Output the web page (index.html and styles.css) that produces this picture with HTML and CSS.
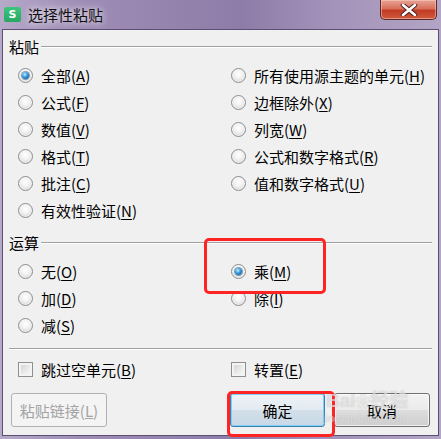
FILE: index.html
```html
<!DOCTYPE html>
<html lang="zh-CN">
<head>
    <meta charset="UTF-8">
    <meta name="viewport" content="width=device-width, initial-scale=1.0">
    <title>选择性粘贴</title>
    <link rel="stylesheet" href="styles.css">
</head>
<body>
    <div class="window">
        <div class="titlebar">
            <span class="app-icon">S</span>
            <span class="title">选择性粘贴</span>
            <button type="button" class="close" aria-label="关闭">
                <svg width="18" height="12" viewBox="0 0 18 12">
                    <path d="M3 1 L15 11 M15 1 L3 11" stroke="#4a2020" stroke-width="4.5" stroke-linecap="round"/>
                    <path d="M3 1 L15 11 M15 1 L3 11" stroke="#ffffff" stroke-width="2.6" stroke-linecap="round"/>
                </svg>
            </button>
        </div>

        <div class="client">
            <div class="group-head"><span>粘贴</span><i class="rule"></i></div>
            <div class="options paste">
                <label class="opt"><span class="radio checked"></span><span>全部(<u>A</u>)</span></label>
                <label class="opt"><span class="radio"></span><span>公式(<u>F</u>)</span></label>
                <label class="opt"><span class="radio"></span><span>数值(<u>V</u>)</span></label>
                <label class="opt"><span class="radio"></span><span>格式(<u>T</u>)</span></label>
                <label class="opt"><span class="radio"></span><span>批注(<u>C</u>)</span></label>
                <label class="opt"><span class="radio"></span><span>有效性验证(<u>N</u>)</span></label>
                <label class="opt"><span class="radio"></span><span>所有使用源主题的单元(<u>H</u>)</span></label>
                <label class="opt"><span class="radio"></span><span>边框除外(<u>X</u>)</span></label>
                <label class="opt"><span class="radio"></span><span>列宽(<u>W</u>)</span></label>
                <label class="opt"><span class="radio"></span><span>公式和数字格式(<u>R</u>)</span></label>
                <label class="opt"><span class="radio"></span><span>值和数字格式(<u>U</u>)</span></label>
            </div>

            <div class="group-head ops-head"><span>运算</span><i class="rule"></i></div>
            <div class="options ops">
                <label class="opt"><span class="radio"></span><span>无(<u>O</u>)</span></label>
                <label class="opt"><span class="radio"></span><span>加(<u>D</u>)</span></label>
                <label class="opt"><span class="radio"></span><span>减(<u>S</u>)</span></label>
                <label class="opt"><span class="radio checked"></span><span>乘(<u>M</u>)</span></label>
                <label class="opt"><span class="radio"></span><span>除(<u>I</u>)</span></label>
            </div>

            <div class="separator"></div>

            <div class="checks">
                <label class="opt"><span class="checkbox"></span><span>跳过空单元(<u>B</u>)</span></label>
                <label class="opt"><span class="checkbox"></span><span>转置(<u>E</u>)</span></label>
            </div>

            <div class="buttons">
                <button type="button" class="btn disabled">粘贴链接(<u>L</u>)</button>
                <span class="spacer"></span>
                <button type="button" class="btn default">确定</button>
                <button type="button" class="btn">取消</button>
            </div>
        </div>

        <div class="mark mark-ops"></div>
        <div class="mark mark-ok"></div>
        <div class="watermark" aria-hidden="true">
            <span class="wm-big">Bai<span class="paw">❀</span>经验</span>
            <span class="wm-small">jingyan.baidu.com</span>
        </div>
    </div>
</body>
</html>
```

FILE: styles.css
```css
body {
    margin: 0;
    padding: 0;
    font-family: "Noto Sans CJK SC", "Liberation Sans", sans-serif;
    font-size: 15px;
    color: #000;
}

.window {
    position: relative;
    width: 441px;
    height: 439px;
    overflow: hidden;
    background: linear-gradient(90deg, #b6a9c9 0%, #9f8db6 18%, #9483ad 40%, #8d7ca8 55%, #a392b9 75%, #b2a5c5 100%);
}

.titlebar {
    height: 29px;
    display: flex;
    align-items: center;
    padding-left: 4px;
    box-sizing: border-box;
}

.app-icon {
    width: 17px;
    height: 15px;
    margin-top: -1px;
    border-radius: 2px;
    background: linear-gradient(#3fc57c, #26a862);
    color: #fff;
    font-family: "DejaVu Sans", sans-serif;
    font-weight: bold;
    font-size: 11px;
    line-height: 15px;
    text-align: center;
}

.title {
    margin-left: 7px;
    font-size: 15px;
    line-height: 20px;
    color: #111;
    text-shadow: 0 0 6px rgba(255, 255, 255, 0.8), 0 0 10px rgba(255, 255, 255, 0.5);
}

.close {
    align-self: flex-start;
    margin-left: auto;
    margin-right: 4px;
    width: 57px;
    height: 20px;
    padding: 0;
    border: 1px solid #5a2a2a;
    border-top: none;
    border-radius: 0 0 5px 5px;
    background: linear-gradient(#e7a595 0%, #d8705c 45%, #c23b25 55%, #cf5a3e 100%);
    box-shadow: inset 0 0 0 1px rgba(255, 210, 200, 0.5);
    display: flex;
    align-items: center;
    justify-content: center;
}

.client {
    margin: 0 2px;
    height: 407px;
    box-sizing: border-box;
    border: 1px solid #5c4f72;
    background: #f0f0f0;
    padding: 7px 0 0;
    display: flex;
    flex-direction: column;
}

.group-head {
    height: 20px;
    display: flex;
    align-items: center;
    padding: 0 6px;
    line-height: 20px;
}

.group-head .rule {
    flex: 1;
    margin-left: 2px;
    border-top: 1px solid #a0a0a0;
    border-bottom: 1px solid #fff;
}

.ops-head {
    margin-top: 9px;
}

.options {
    margin-top: 5px;
    padding-left: 15px;
    display: grid;
    grid-auto-flow: column;
    grid-template-columns: 213px 1fr;
}

.paste {
    grid-template-rows: repeat(6, 27px);
}

.ops {
    grid-template-rows: repeat(3, 27px);
}

.opt {
    display: flex;
    align-items: center;
    gap: 8px;
    line-height: 20px;
    white-space: nowrap;
}

.opt u {
    text-underline-offset: 2px;
}

.radio {
    position: relative;
    flex: none;
    width: 15px;
    height: 15px;
    box-sizing: border-box;
    border-radius: 50%;
    border: 1px solid #8c8e90;
    background: radial-gradient(circle at 50% 40%, #ffffff 0%, #f2f2f2 40%, #c9cacb 100%);
    box-shadow: inset 0 0 0 1px rgba(255, 255, 255, 0.6);
}

.radio.checked::after {
    content: "";
    position: absolute;
    left: 3px;
    top: 3px;
    width: 7px;
    height: 7px;
    border-radius: 50%;
    background: radial-gradient(circle at 40% 35%, #c8f0ff 0%, #2e96dc 45%, #0b3f78 100%);
    box-shadow: 0 0 0 1px rgba(20, 70, 120, 0.5);
}

.separator {
    margin: 9px 6px 0;
    border-top: 1px solid #a0a0a0;
    border-bottom: 1px solid #fff;
}

.checks {
    margin-top: 6px;
    padding-left: 15px;
    height: 27px;
    display: grid;
    grid-template-columns: 213px 1fr;
}

.checkbox {
    flex: none;
    width: 15px;
    height: 15px;
    box-sizing: border-box;
    border: 1px solid #8e8f8f;
    background: linear-gradient(135deg, #cfcfcf 0%, #eeeeee 65%, #fafafa 100%);
    box-shadow: inset 0 0 0 2px #f4f4f4;
}

.buttons {
    margin-top: 10px;
    padding: 0 8px;
    display: flex;
    gap: 9px;
}

.spacer {
    flex: 1;
}

.btn {
    height: 34px;
    width: 96px;
    padding: 0;
    font-family: inherit;
    font-size: 15px;
    color: #000;
    border: 1px solid #707070;
    border-radius: 3px;
    background: linear-gradient(#f2f2f2 0%, #ebebeb 50%, #dddddd 51%, #cfcfcf 100%);
    box-shadow: inset 0 0 0 1px rgba(255, 255, 255, 0.7);
}

.btn.default {
    width: 95px;
    border-color: #3c7fb1;
    background: linear-gradient(#eef3f7 0%, #e2eaf1 50%, #d3dfe9 51%, #c8d8e6 100%);
    box-shadow: inset 0 0 0 1px #7fd0f4;
}

.btn.disabled {
    color: #a3a3a3;
    border-color: #adb2b5;
    background: #f4f4f4;
    box-shadow: none;
}

.mark {
    position: absolute;
    border: 3px solid #ff2424;
    border-radius: 5px;
    box-sizing: border-box;
}

.mark-ops {
    left: 204px;
    top: 238px;
    width: 122px;
    height: 56px;
}

.mark-ok {
    left: 227px;
    top: 391px;
    width: 108px;
    height: 46px;
}

.watermark {
    position: absolute;
    left: 326px;
    top: 390px;
    display: flex;
    flex-direction: column;
    color: rgba(255, 255, 255, 0.55);
    text-shadow: 0 0 1px rgba(120, 120, 120, 0.45);
    pointer-events: none;
}

.wm-big {
    font-family: "Liberation Sans", "Noto Sans CJK SC", sans-serif;
    font-weight: bold;
    font-size: 19px;
    line-height: 22px;
}

.paw {
    font-size: 15px;
}

.wm-small {
    font-family: "Liberation Sans", sans-serif;
    font-size: 10px;
    line-height: 12px;
    margin-left: -2px;
}
```
